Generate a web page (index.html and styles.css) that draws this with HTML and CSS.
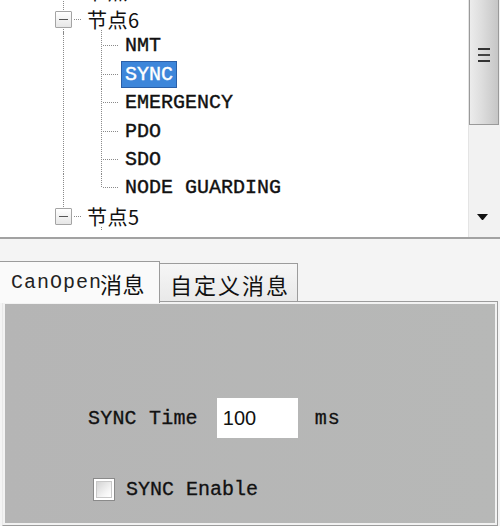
FILE: index.html
```html
<!DOCTYPE html>
<html>
<head>
<meta charset="utf-8">
<link rel="stylesheet" href="styles.css">
</head>
<body>
<div class="app">
  <div class="tree-pane">
    <div class="tree">
      <div class="row root first">
        <span class="g1"><span class="exp"><span class="minus"></span></span><span class="hdot"></span></span>
        <span class="rlabel">节点7</span>
      </div>
      <div class="row root open">
        <span class="g1"><span class="exp"><span class="minus"></span></span><span class="hdot"></span></span>
        <span class="rlabel">节点6</span>
      </div>
      <div class="row child">
        <span class="g1 vline"></span><span class="g2"></span>
        <span class="clabel">NMT</span>
      </div>
      <div class="row child">
        <span class="g1 vline"></span><span class="g2"></span>
        <span class="clabel selected">SYNC</span>
      </div>
      <div class="row child">
        <span class="g1 vline"></span><span class="g2"></span>
        <span class="clabel">EMERGENCY</span>
      </div>
      <div class="row child">
        <span class="g1 vline"></span><span class="g2"></span>
        <span class="clabel">PDO</span>
      </div>
      <div class="row child">
        <span class="g1 vline"></span><span class="g2"></span>
        <span class="clabel">SDO</span>
      </div>
      <div class="row child">
        <span class="g1 vline"></span><span class="g2 last"></span>
        <span class="clabel">NODE GUARDING</span>
      </div>
      <div class="row root open lastroot">
        <span class="g1"><span class="exp"><span class="minus"></span></span><span class="hdot"></span></span>
        <span class="rlabel">节点5</span>
      </div>
    </div>
    <div class="scrollbar">
      <div class="thumb">
        <svg class="grip" width="14" height="16" viewBox="0 0 14 16">
          <rect x="1" y="1" width="12" height="2" fill="#333"/>
          <rect x="1" y="7" width="12" height="2" fill="#444"/>
          <rect x="1" y="13" width="12" height="2" fill="#333"/>
        </svg>
      </div>
      <div class="track">
        <svg class="arrow" width="11" height="7" viewBox="0 0 11 7">
          <path d="M0 0 H11 L6 6 H5 Z" fill="#111"/>
        </svg>
      </div>
    </div>
  </div>
  <div class="lower">
    <div class="tabs">
      <div class="tab active"><span class="mono">CanOpen</span><span class="cjk">消息</span></div>
      <div class="tab"><span class="cjk">自定义消息</span></div>
    </div>
    <div class="panel">
      <div class="field-row">
        <span class="mono label">SYNC Time</span>
        <span class="input">100</span>
        <span class="mono unit">ms</span>
      </div>
      <div class="check-row">
        <span class="checkbox"><span class="check-inner"></span></span>
        <span class="mono label">SYNC Enable</span>
      </div>
    </div>
  </div>
</div>
</body>
</html>
```

FILE: styles.css
```css
* { box-sizing: border-box; }
html, body {
  margin: 0;
  padding: 0;
  width: 500px;
  height: 526px;
  overflow: hidden;
  background: #f4f4f4;
}
.app {
  width: 500px;
  height: 526px;
  display: flex;
  flex-direction: column;
  font-family: "Liberation Mono", monospace;
  color: #111;
}
.tree-pane {
  height: 239px;
  display: flex;
  background: #fff;
  border-bottom: 2px solid #a2a2a2;
}
.tree {
  flex: 1;
  overflow: hidden;
}
.tree .row:first-child {
  margin-top: -23px;
}
.row {
  height: 28.4px;
  display: flex;
  align-items: center;
  padding-left: 44px;
}
.tree .row.child:nth-child(3) {
  margin-top: -2px;
}
.g1, .g2 {
  width: 38px;
  height: 100%;
  flex: none;
  display: flex;
  align-items: center;
}
.vline {
  background-image: repeating-linear-gradient(to bottom, #8a8a8a 0 1px, transparent 1px 2px);
  background-size: 1px 100%;
  background-position: 19px 0;
  background-repeat: no-repeat;
}
.g2 {
  background-image:
    repeating-linear-gradient(to bottom, #8a8a8a 0 1px, transparent 1px 2px),
    repeating-linear-gradient(to right, #8a8a8a 0 1px, transparent 1px 2px);
  background-size: 1px 100%, 15px 1px;
  background-position: 19px 0, 21px 50%;
  background-repeat: no-repeat;
}
.g2.last {
  background-size: 1px 50%, 15px 1px;
}
.root .g1 {
  padding-left: 11px;
  background-image: repeating-linear-gradient(to bottom, #8a8a8a 0 1px, transparent 1px 2px);
  background-size: 1px 100%;
  background-position: 19px 0;
  background-repeat: no-repeat;
}
.root.lastroot .g1 {
  background-size: 1px 50%;
}
.exp {
  width: 17px;
  height: 17px;
  border: 1px solid #a4a4a4;
  border-radius: 1px;
  background: linear-gradient(to bottom, #ffffff, #e6e6e6);
  display: flex;
  align-items: center;
  justify-content: center;
  flex: none;
}
.minus {
  width: 9px;
  height: 1.5px;
  background: #555;
}
.hdot {
  width: 8px;
  height: 1px;
  margin-left: 2px;
  background-image: repeating-linear-gradient(to right, #8a8a8a 0 1px, transparent 1px 2px);
}
.rlabel {
  margin-left: 5px;
  height: 100%;
  display: flex;
  align-items: center;
  font-family: "Noto Sans CJK SC", sans-serif;
  font-size: 20px;
  color: #111;
  letter-spacing: 0.5px;
}
.root.open .rlabel {
  background-image: repeating-linear-gradient(to bottom, #8a8a8a 0 1px, transparent 1px 2px);
  background-size: 1px 4px;
  background-position: 14px 100%;
  background-repeat: no-repeat;
}
.clabel {
  margin-left: 1px;
  height: 27px;
  line-height: 25px;
  padding: 0 3px;
  border: 1px solid transparent;
  font-size: 20px;
  letter-spacing: 0;
  color: #111;
  white-space: nowrap;
  -webkit-text-stroke: 0.4px #111;
}
.clabel.selected {
  background: #3d86da;
  color: #fff;
  -webkit-text-stroke: 0.4px #fff;
  border: 1px solid #2a5fa8;
}
.scrollbar {
  width: 32px;
  flex: none;
  display: flex;
  flex-direction: column;
  background: #f2f2f2;
  border-left: 1px solid #e4e4e4;
}
.thumb {
  height: 125px;
  width: 30px;
  border: 1px solid #9a9a9a;
  border-top: none;
  background: linear-gradient(to right, #ececec 0%, #dedede 40%, #c6c6c6 100%);
  display: flex;
  align-items: flex-start;
  justify-content: center;
  padding-top: 47px;
}
.track {
  flex: 1;
  display: flex;
  align-items: flex-end;
  justify-content: center;
  padding-bottom: 16px;
  padding-right: 4px;
}
.lower {
  flex: 1;
  display: flex;
  flex-direction: column;
  padding-top: 22px;
  padding-right: 2px;
  background: #f4f4f4;
}
.tabs {
  display: flex;
  align-items: flex-end;
  height: 40px;
  position: relative;
  z-index: 1;
}
.tab {
  height: 38px;
  width: 138px;
  border: 1px solid #9c9c9c;
  border-left: none;
  border-bottom: none;
  background: linear-gradient(to bottom, #f6f6f6, #e9e9e9);
  display: flex;
  align-items: center;
  padding-left: 10px;
  padding-top: 2px;
}
.tab.active {
  width: 160px;
  height: 42px;
  margin-bottom: -2px;
  background: #fafafa;
  padding-left: 11px;
  padding-top: 0;
}
.tab .mono {
  font-size: 20px;
  color: #222;
  letter-spacing: 1px;
}
.tab .cjk {
  font-family: "Noto Sans CJK SC", sans-serif;
  font-size: 22px;
  color: #111;
  letter-spacing: 2px;
}
.tab.active .cjk {
  margin-left: -2px;
  letter-spacing: 0.5px;
}
.panel {
  flex: 1;
  margin-left: 2px;
  border: 1px solid #9c9c9c;
  border-left-color: #e8e8e8;
  box-shadow: inset 0 0 0 2px #f2f2f2;
  background: linear-gradient(to right, #b5b5b5, #b7b8b7);
  padding: 96px 0 0 85px;
  display: flex;
  flex-direction: column;
}
.field-row {
  display: flex;
  align-items: center;
  height: 40px;
}
.label {
  font-size: 20px;
  color: #111;
  white-space: nowrap;
  -webkit-text-stroke: 0.3px #111;
}
.field-row .label {
  letter-spacing: 0.2px;
}
.input {
  margin-left: 19px;
  width: 81px;
  height: 40px;
  background: #fff;
  font-family: "Liberation Sans", sans-serif;
  font-size: 20px;
  color: #111;
  padding-left: 6px;
  display: flex;
  align-items: center;
}
.unit {
  margin-left: 17px;
  font-size: 20px;
  letter-spacing: 1px;
  -webkit-text-stroke: 0.3px #111;
}
.check-row {
  display: flex;
  align-items: center;
  margin-top: 40px;
}
.checkbox {
  margin-left: 5px;
  width: 22px;
  height: 23px;
  border: 1px solid #8a8a8a;
  background: #fff;
  padding: 2px;
  display: flex;
}
.check-inner {
  flex: 1;
  border: 1px solid #c8c8c8;
  background: linear-gradient(135deg, #d4d4d4, #f6f6f6 70%, #fff);
}
.check-row .label {
  margin-left: 11px;
}
```
